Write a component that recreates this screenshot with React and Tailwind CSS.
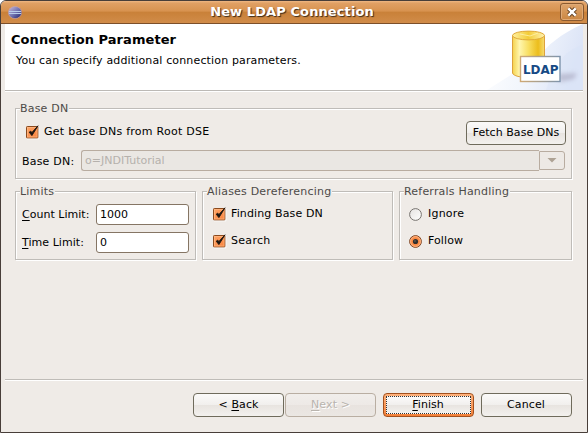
import React from "react";

function Group({ title, className, children }) {
  return (
    <section className={`relative border border-[#bfbcb8] shadow-[1px_1px_0_#fff,inset_1px_1px_0_#fff] ${className}`}>
      <h2 className="absolute left-[4px] -top-[8px] h-[15px] bg-[#efebe7] pr-px leading-[15px] text-[#4d4a47] whitespace-nowrap tracking-[0.2px]">{title}</h2>
      {children}
    </section>
  );
}

function CheckIcon() {
  return (
    <svg width="14" height="15" viewBox="0 0 14 15" className="shrink-0">
      <defs>
        <linearGradient id="box" x1="0" y1="0" x2="1" y2="1">
          <stop offset="0" stopColor="#ffa668" />
          <stop offset="1" stopColor="#f9823c" />
        </linearGradient>
      </defs>
      <rect x="0.5" y="1.500" width="11.500" height="11.500" rx="0.8" fill="url(#box)" stroke="#8a4a1e" />
      <path d="M13 2V14H1" fill="none" stroke="#fff" strokeOpacity=".6" />
      <rect x="1.5" y="2.500" width="9.500" height="9.500" fill="none" stroke="#ffc08f" strokeOpacity=".6" />
      <path d="M3.200 7.200 L5.900 10.600 L12 0.800 L6 7.400 L4.600 6.300 Z" fill="#1a1410" stroke="#1a1410" strokeWidth=".9" strokeLinejoin="round" />
    </svg>
  );
}

function RadioIcon({ on }) {
  return (
    <svg width="13" height="13" viewBox="0 0 13 13" className="shrink-0">
      <defs>
        <linearGradient id="off" x1="0" y1="0" x2="1" y2="1">
          <stop offset="0" stopColor="#e4e2e0" />
          <stop offset="1" stopColor="#ffffff" />
        </linearGradient>
      </defs>
      <circle cx="6.5" cy="6.5" r="5.9" fill={on ? "#fa8a44" : "url(#off)"} stroke={on ? "#7b4a2c" : "#77736f"} />
      {on && <circle cx="6.5" cy="6.5" r="4.9" fill="none" stroke="#ffb98a" />}
      {on && <circle cx="6.5" cy="6.5" r="2.6" fill="#33302e" />}
      {on && <circle cx="6" cy="6" r="0.8" fill="#6b6b6b" />}
    </svg>
  );
}

const face = "h-[24px] rounded-[4px] border flex justify-center leading-[21px] whitespace-nowrap";
const normal = "border-[#6f6b5c] bg-[linear-gradient(#fbfaf9,#f1efed_50%,#e8e4e0_52%,#f3f1ee)]";

function Mn({ children }) {
  return <span className="underline underline-offset-[2px] decoration-1 [text-decoration-skip-ink:none]">{children}</span>;
}

function Banner() {
  return (
    <svg width="96" height="66" viewBox="487 24 96 66" className="block">
      <defs>
        <linearGradient id="sky" x1="0" y1="0" x2="1" y2="0.2">
          <stop offset="0" stopColor="#fff" />
          <stop offset=".55" stopColor="#f1f5fc" />
          <stop offset="1" stopColor="#dde5f7" />
        </linearGradient>
        <linearGradient id="gold" x1="0" y1="0" x2="1" y2="0">
          <stop offset="0" stopColor="#f4d24c" />
          <stop offset=".22" stopColor="#fff6ae" />
          <stop offset=".5" stopColor="#f8df62" />
          <stop offset=".8" stopColor="#ecbd1c" />
          <stop offset="1" stopColor="#f8dc72" />
        </linearGradient>
        <linearGradient id="lid" x1="0" y1="0" x2="1" y2="0">
          <stop offset="0" stopColor="#fff0a0" />
          <stop offset=".5" stopColor="#f3cc38" />
          <stop offset="1" stopColor="#fff2b0" />
        </linearGradient>
        <linearGradient id="frame" x1="0" y1="0" x2="1" y2="0">
          <stop offset="0" stopColor="#cfa974" />
          <stop offset="1" stopColor="#7e94ac" />
        </linearGradient>
        <filter id="soft" x="-50%" y="-100%" width="200%" height="300%"><feGaussianBlur stdDeviation="2" /></filter>
      </defs>
      <path d="M583 24 C562 33 546 46 538 58 L487 90 H583 Z" fill="url(#sky)" />
      <path d="M583 45 C567 49 555 62 546 90 H583 Z" fill="#d8e1f5" opacity=".35" />
      <path d="M558 74 L577 73 L574 79 L560 82 Z" fill="#9c98b0" opacity=".5" filter="url(#soft)" />
      <path d="M512.5 35.5 V73 C514 79 543 79 544.500 73 V35.500 Z" fill="url(#gold)" stroke="#dda23c" />
      <ellipse cx="528.5" cy="35.500" rx="16" ry="4.400" fill="url(#lid)" stroke="#e0a93a" />
      <path d="M520 34 L530 36 L538 33" fill="none" stroke="#fff6b8" opacity=".7" />
      <rect x="520.5" y="56.500" width="39.500" height="25" fill="#fff" stroke="url(#frame)" strokeWidth="1.400" />
      <text x="523" y="74" textLength="35.500" lengthAdjust="spacingAndGlyphs" fill="#164a85" fontFamily="DejaVu Sans" fontWeight="700" fontSize="13">LDAP</text>
    </svg>
  );
}

export default function App() {
  return (
    <div className="w-[588px] h-[433px] bg-white">
      <div className="w-[588px] h-[433px] overflow-hidden rounded-t-[6px] border border-[#483e39] bg-[#efebe7] flex flex-col font-['DejaVu_Sans',sans-serif] text-[11px] text-black">
        <header className="h-[23px] shrink-0 border-b border-[#7c4f29] bg-[linear-gradient(#efb783,#e0a064_10%,#d89350_45%,#c98139_52%,#d18c49)] flex items-center px-[7px]">
          <svg width="14" height="14" viewBox="0 0 14 14" className="mt-[1px]">
            <defs>
              <linearGradient id="orb" x1="0" y1="0" x2="1" y2="1">
                <stop offset="0" stopColor="#d2bcd8" />
                <stop offset=".5" stopColor="#7375b4" />
                <stop offset="1" stopColor="#1b1c63" />
              </linearGradient>
            </defs>
            <ellipse cx="7" cy="6.500" rx="6.700" ry="6.100" fill="url(#orb)" stroke="#c6a5ad" strokeWidth=".6" />
            <path d="M1 5.500H13M1 7.500H13" stroke="#b7ccea" strokeWidth="1" />
          </svg>
          <h1 className="grow pl-[2px] text-center text-[13px] leading-[20px] font-bold text-white tracking-[0.1px] [text-shadow:1px_1px_1px_#3c2a1a]">New LDAP Connection</h1>
          <button className="w-[24px] h-[18px] -mr-[4px] rounded-[3px] border border-[#8a5a30] bg-[linear-gradient(#dea46c,#cb8742)] shadow-[inset_0_0_0_1px_#e0aa76] flex items-center justify-center">
            <svg width="12" height="12" viewBox="0 0 12 12">
              <path d="M2.500 2.500 L9.500 9.500 M9.500 2.500 L2.500 9.500" stroke="#5b3a1d" strokeWidth="4.200" />
              <path d="M2.300 2.300 L9.700 9.700 M9.700 2.300 L2.300 9.700" stroke="#fff" strokeWidth="2.400" />
            </svg>
          </button>
        </header>

        <div className="mx-[4px] h-[67px] shrink-0 bg-white border-b border-[#bcb9b5] flex justify-between">
          <div className="pt-[7px] pl-[6px] whitespace-nowrap">
            <h2 className="text-[13px] leading-[18px] font-bold tracking-[0.06px]">Connection Parameter</h2>
            <p className="mt-[4px] pl-[5px] leading-[16px] tracking-[0.15px]">You can specify additional connection parameters.</p>
          </div>
          <Banner />
        </div>

        <main className="mx-[4px] h-[288px] shrink-0 border-t border-white pl-[10px] pt-[16px]">
          <Group title="Base DN" className="w-[557px] h-[71px]">
            <div className="flex justify-between pt-[12px] pl-[10px] pr-[5px]">
              <label className="flex">
                <span className="pt-[4px]"><CheckIcon /></span>
                <span className="ml-[4px] leading-[21px] tracking-[0.26px]">Get base DNs from Root DSE</span>
              </label>
              <button className={`${face} ${normal} w-[100px] tracking-[0.05px]`}>Fetch Base DNs</button>
            </div>
            <div className="flex mt-[5px] pl-[6px]">
              <span className="w-[59px] leading-[23px] tracking-[0.2px]">Base DN:</span>
              <div className="w-[458px] h-[21px] rounded-l-[3px] border border-r-0 border-[#b8aca0] bg-[#eae7e3] pl-[3px] leading-[20px] text-[#b5b1ac]">o=JNDITutorial</div>
              <div className="w-[26px] h-[19px] mt-[1px] rounded-r-[3px] border border-[#b8aca0] bg-[#ede9e5] flex items-center justify-center">
                <svg width="10" height="5" viewBox="0 0 10 5"><path d="M0.500 0H9.500L5 4.500Z" fill="#aea294" /></svg>
              </div>
            </div>
          </Group>

          <div className="mt-[12px] flex gap-[6px]">
            <Group title="Limits" className="w-[181px] h-[69px]">
              <div className="pt-[12px] pl-[6px] flex flex-col gap-[6px]">
                <label className="flex h-[22px]">
                  <span className="w-[74px] leading-[21px] tracking-[0.02px]"><Mn>C</Mn>ount Limit:</span>
                  <span className="w-[93px] h-[21px] rounded-[3px] border border-[#857564] bg-white pl-[3px] leading-[19px]">1000</span>
                </label>
                <label className="flex h-[22px]">
                  <span className="w-[74px] leading-[21px] tracking-[0.05px]"><Mn>T</Mn>ime Limit:</span>
                  <span className="w-[93px] h-[21px] rounded-[3px] border border-[#857564] bg-white pl-[3px] leading-[19px]">0</span>
                </label>
              </div>
            </Group>
            <Group title="Aliases Dereferencing" className="w-[191px] h-[69px]">
              <div className="pt-[12px] pl-[10px] flex flex-col gap-[7px]">
                <label className="flex h-[20px]"><span className="pt-[3px]"><CheckIcon /></span><span className="ml-[4px] leading-[19px] tracking-[0.12px]">Finding Base DN</span></label>
                <label className="flex h-[20px]"><span className="pt-[3px]"><CheckIcon /></span><span className="ml-[4px] leading-[19px] tracking-[0.3px]">Search</span></label>
              </div>
            </Group>
            <Group title="Referrals Handling" className="w-[173px] h-[69px]">
              <div className="pt-[12px] pl-[9px] flex flex-col gap-[7px]">
                <label className="flex h-[20px]"><span className="pt-[4px]"><RadioIcon /></span><span className="ml-[6px] leading-[19px] tracking-[0.2px]">Ignore</span></label>
                <label className="flex h-[20px]"><span className="pt-[4px]"><RadioIcon on /></span><span className="ml-[6px] leading-[19px] tracking-[0.1px]">Follow</span></label>
              </div>
            </Group>
          </div>
        </main>

        <footer className="mx-[4px] grow border-t border-[#bfbcb8] shadow-[inset_0_1px_0_#fff] flex justify-end pt-[13px] pr-[11px]">
          <button className={`${face} ${normal} w-[91px] tracking-[0.1px]`}><span>&lt; <Mn>B</Mn>ack</span></button>
          <button className={`${face} w-[91px] ml-[1px] border-[#b9aea2] bg-[linear-gradient(#f1eeeb,#ede9e6_50%,#e8e3df_52%,#ebe7e3)] text-[#b9b4ae] [text-shadow:1px_1px_0_#fff] tracking-[0.1px]`}><span><Mn>N</Mn>ext &gt;</span></button>
          <button className="w-[91px] h-[24px] ml-[7px] rounded-[4px] border border-[#a3501d] bg-[linear-gradient(#ffb27c,#f4813a)] p-[2px] tracking-[0px]">
            <span className="block h-[18px] border border-dotted border-[#333] bg-[linear-gradient(#fbfaf9,#f1efed_50%,#e8e4e0_52%,#f3f1ee)] pr-px leading-[15px]"><Mn>F</Mn>inish</span>
          </button>
          <button className={`${face} ${normal} w-[91px] ml-[7px] pr-px tracking-[0.1px]`}>Cancel</button>
        </footer>
      </div>
    </div>
  );
}
